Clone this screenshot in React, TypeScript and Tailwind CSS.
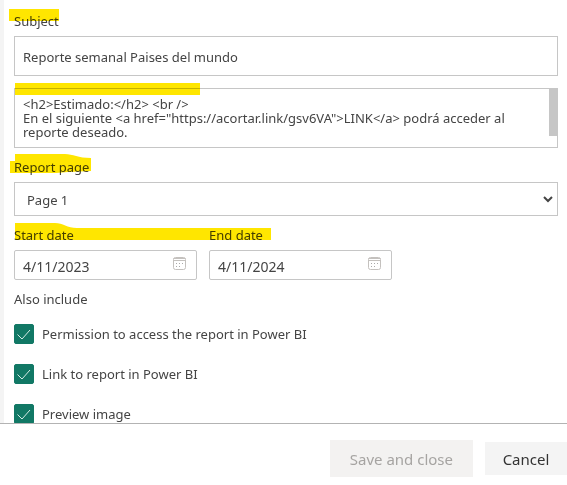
import { useState } from "react";

const fieldBox = "block w-full border border-[#c6c6c6] bg-white text-[#444] outline-none";

function Marker({ className, viewBox, d }: { className: string; viewBox: string; d: string }) {
  return (
    <svg
      aria-hidden="true"
      className={`pointer-events-none absolute mix-blend-multiply ${className}`}
      viewBox={viewBox}
      preserveAspectRatio="none"
      fill="#ffe600"
    >
      <path d={d} />
    </svg>
  );
}

function CalendarIcon() {
  return (
    <svg
      aria-hidden="true"
      className="pointer-events-none absolute top-[6px] right-[11px] size-[14px]"
      viewBox="0 0 14 14"
      fill="none"
      stroke="#c4c1be"
    >
      <rect x="1.500" y="1.500" width="12" height="12" rx="2" />
      <path d="M1.500 2.500h12M1.500 4.500h12" />
      <path d="M4 7.500h1M7 7.500h1M10 7.500h1M4 10.500h1M7 10.500h1" stroke="#aaa" />
    </svg>
  );
}

function DateField({ id, label, initial }: { id: string; label: string; initial: string }) {
  const [value, setValue] = useState(initial);
  return (
    <div className="w-[183px]">
      <label htmlFor={id} className="mb-[5px] block w-fit">
        {label}
      </label>
      <div className="relative">
        <input
          id={id}
          type="text"
          value={value}
          onChange={(e) => setValue(e.target.value)}
          className={`${fieldBox} h-[30px] rounded-[2px] pt-0.5 pr-8 pl-2 text-[14px]`}
        />
        <CalendarIcon />
      </div>
    </div>
  );
}

function CheckRow({ id, label }: { id: string; label: string }) {
  const [checked, setChecked] = useState(true);
  return (
    <div className="flex items-center gap-2">
      <span className="relative size-5 shrink-0">
        <input
          id={id}
          type="checkbox"
          checked={checked}
          onChange={(e) => setChecked(e.target.checked)}
          className="peer block size-5 appearance-none rounded-[2px] border border-[#117865] bg-white checked:bg-[#117865]"
        />
        <svg
          aria-hidden="true"
          className="pointer-events-none absolute inset-0 hidden size-5 peer-checked:block"
          viewBox="0 0 20 20"
          fill="none"
          stroke="#d5ebe6"
        >
          <path d="M3.5 10.5l4.500 4.500L16 6" />
        </svg>
      </span>
      <label htmlFor={id}>{label}</label>
    </div>
  );
}

export default function App() {
  const [subject, setSubject] = useState("Reporte semanal Paises del mundo");
  const [body, setBody] = useState(
    '<h2>Estimado:</h2> <br />\nEn el siguiente <a href="https://acortar.link/gsv6VA">LINK</a> podrá acceder al reporte deseado.'
  );
  return (
    <form
      onSubmit={(e) => e.preventDefault()}
      className="flex h-screen flex-col bg-white font-['Noto_Sans','Open_Sans',sans-serif] text-[13px] leading-5 text-[#444]"
    >
      <div className="min-h-0 flex-1 overflow-hidden border-l-4 border-[#f4f4f4] pt-[11px] pr-[9px] pl-[10px]">
        <div className="relative mb-[5px] w-fit">
          <label htmlFor="subject" className="block">
            Subject
          </label>
          <Marker className="-top-[2px] -left-[5px] h-3 w-[50px]" viewBox="0 0 50 12" d="M0 0H50V12H0z" />
        </div>
        <input
          id="subject"
          type="text"
          value={subject}
          onChange={(e) => setSubject(e.target.value)}
          className={`${fieldBox} h-10 px-2 pt-0.5`}
        />

        <div className="relative mt-3">
          <textarea
            aria-label="Message"
            value={body}
            onChange={(e) => setBody(e.target.value)}
            className={`${fieldBox} h-[60px] resize-none overflow-hidden py-2 pr-6 pl-2 leading-[14px]`}
          />
          <div className="absolute top-0 right-0 h-12 w-[9px] bg-[#c6c6c6]" />
          <Marker className="-top-[5px] left-px h-3 w-[185px]" viewBox="0 0 185 12" d="M0 0H185V12H0z" />
        </div>

        <div className="relative mt-[9px] mb-[5px] w-fit">
          <label htmlFor="page" className="block">
            Report page
          </label>
          <Marker
            className="-top-[3px] -left-1 h-5 w-[81px]"
            viewBox="0 0 81 20"
            d="M5 0H55C63 0 68 4 81 4V17L58 18L46 19L5 19H0V7H5z"
          />
        </div>
        <div className="relative">
          <select id="page" className={`${fieldBox} h-[34px] appearance-none px-3 pt-0.5`}>
            <option>Page 1</option>
          </select>
          <svg
            aria-hidden="true"
            className="pointer-events-none absolute top-[13px] right-[5px] h-2 w-[10px]"
            viewBox="0 0 10 8"
            fill="none"
            stroke="#444"
            strokeWidth="2"
          >
            <path d="M1 2l4 4 4-4" />
          </svg>
        </div>

        <div className="relative mt-[9px] flex gap-3">
          <DateField id="start" label="Start date" initial="4/11/2023" />
          <DateField id="end" label="End date" initial="4/11/2024" />
          <Marker
            className="-top-[2px] left-px h-[17px] w-[256px]"
            viewBox="0 0 256 17"
            d="M0 0H40C48 0 52 5 62 5H256V17H0z"
          />
        </div>

        <fieldset className="mt-[9px]">
          <legend className="mb-[15px]">Also include</legend>
          <div className="flex flex-col gap-5">
            <CheckRow id="permission" label="Permission to access the report in Power BI" />
            <CheckRow id="link" label="Link to report in Power BI" />
            <CheckRow id="preview" label="Preview image" />
          </div>
        </fieldset>
      </div>

      <footer className="flex shrink-0 items-center justify-end gap-3 border-t border-[#b3b3b3] pt-4 pb-2 text-[15px]">
        <button type="submit" disabled className="h-[37px] bg-[#f3f2f1] px-5 text-[#a6a4a2]">
          Save and close
        </button>
        <button type="button" className="h-[33px] w-[82px] bg-[#f4f4f4] text-[#333]">
          Cancel
        </button>
      </footer>
    </form>
  );
}
